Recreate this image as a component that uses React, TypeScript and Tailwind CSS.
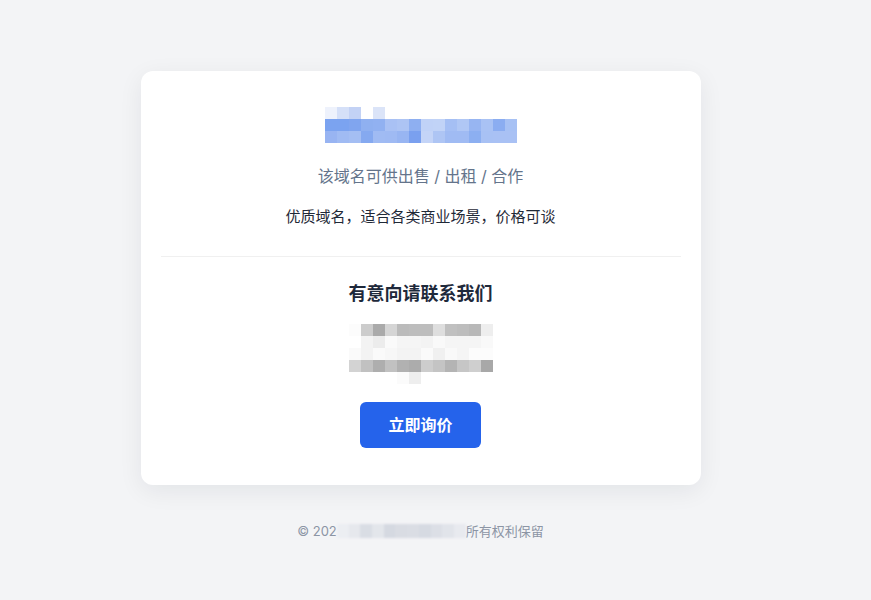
import React from "react";

const titleRows: string[][] = [
  ["bg-[#eef2fc]", "bg-[#d5e0f8]", "bg-[#c3d2f5]", "bg-transparent", "bg-[#dbe4f8]", "bg-transparent", "bg-transparent", "bg-transparent", "bg-transparent", "bg-transparent", "bg-transparent", "bg-transparent", "bg-transparent", "bg-transparent", "bg-transparent", "bg-transparent"],
  ["bg-[#7ba3f0]", "bg-[#7ba3f0]", "bg-[#80a5ef]", "bg-[#8fb0f0]", "bg-[#91b1f1]", "bg-[#a9c1f4]", "bg-[#adc4f4]", "bg-[#8eaff1]", "bg-[#c0d2f7]", "bg-[#c1d3f7]", "bg-[#a5bff4]", "bg-[#b0c7f5]", "bg-[#97b5f2]", "bg-[#a9c2f4]", "bg-[#8badf1]", "bg-[#a7c1f4]"],
  ["bg-[#98b4f2]", "bg-[#a0bbf3]", "bg-[#a4bef3]", "bg-[#85a9f0]", "bg-[#a0bbf3]", "bg-[#9fbaf3]", "bg-[#98b5f2]", "bg-[#7aa0ef]", "bg-[#c4d4f7]", "bg-[#aec5f4]", "bg-[#a0bbf3]", "bg-[#a0bbf3]", "bg-[#8caff1]", "bg-[#a8c1f4]", "bg-[#a9c1f4]", "bg-[#a9c1f4]"],
];

const contactRows: string[][] = [
  ["bg-[#fcfcfc]", "bg-[#cccccc]", "bg-[#aaaaaa]", "bg-[#d5d5d5]", "bg-[#bbbbbb]", "bg-[#bdbdbd]", "bg-[#bdbdbd]", "bg-[#dedede]", "bg-[#c0c0c0]", "bg-[#bdbdbd]", "bg-[#b8b8b8]", "bg-[#eeeeee]"],
  ["bg-transparent", "bg-[#f3f3f3]", "bg-[#ececec]", "bg-[#fafafa]", "bg-[#f5f5f5]", "bg-[#f5f5f5]", "bg-[#f3f3f3]", "bg-[#f9f9f9]", "bg-[#f5f5f5]", "bg-[#f5f5f5]", "bg-[#f5f5f5]", "bg-[#f9f9f9]"],
  ["bg-[#fafafa]", "bg-[#f3f3f3]", "bg-[#fafafa]", "bg-[#f7f7f7]", "bg-[#f3f3f3]", "bg-[#f3f3f3]", "bg-[#fafafa]", "bg-[#f0f0f0]", "bg-[#f9f9f9]", "bg-[#f5f5f5]", "bg-[#fcfcfc]", "bg-[#fcfcfc]"],
  ["bg-[#d3d3d3]", "bg-[#c1c1c1]", "bg-[#aeaeae]", "bg-[#c1c1c1]", "bg-[#b1b1b1]", "bg-[#acacac]", "bg-[#cdcdcd]", "bg-[#c4c4c4]", "bg-[#b4b4b4]", "bg-[#c6c6c6]", "bg-[#cfcfcf]", "bg-[#a8a8a8]"],
  ["bg-transparent", "bg-transparent", "bg-transparent", "bg-transparent", "bg-[#fbfbfb]", "bg-[#eeeeee]", "bg-transparent", "bg-transparent", "bg-transparent", "bg-transparent", "bg-transparent", "bg-transparent"],
];

const footerCells: string[] = [
  "bg-[#eceef2]", "bg-[#e6e8ed]", "bg-[#d9dde4]", "bg-[#e3e6eb]", "bg-[#d5d9e1]", "bg-[#d9dce3]", "bg-[#dadde4]", "bg-[#d6dae2]", "bg-[#dcdfe6]", "bg-[#e1e4ea]", "bg-[#e8eaef]",
];

function Mosaic({ rows }: { rows: string[][] }) {
  return (
    <div className="flex flex-col">
      {rows.map((row, i) => (
        <div key={i} className="flex">
          {row.map((c, j) => (
            <div key={j} className={`w-[12px] h-[12px] ${c}`} />
          ))}
        </div>
      ))}
    </div>
  );
}

export default function App() {
  return (
    <div
      className="min-h-screen w-full bg-[#f3f4f6] pr-[30px] pt-[71px] flex flex-col items-center"
      style={{ fontFamily: 'Inter, "Noto Sans CJK SC", sans-serif' }}
    >
      <div className="w-[560px] bg-white rounded-[12px] shadow-[0_6px_24px_rgba(15,23,42,0.07)] px-[20px] pt-[36px] pb-[37px] flex flex-col items-center">
        <Mosaic rows={titleRows} />
        <p className="mt-[21px] text-[16px] leading-[24px] text-[#64748b]">
          该域名可供出售 / 出租 / 合作
        </p>
        <p className="mt-[18px] text-[15px] leading-[22px] text-[#1f2937]">
          优质域名，适合各类商业场景，价格可谈
        </p>
        <div className="w-full h-px bg-[#f0f0f0] mt-[28px]" />
        <h2 className="mt-[23px] text-[18px] leading-[28px] font-bold text-[#1e293b]">
          有意向请联系我们
        </h2>
        <div className="mt-[16px]">
          <Mosaic rows={contactRows} />
        </div>
        <button className="mt-[18px] bg-[#2563eb] text-white font-bold text-[16px] leading-[24px] px-[28px] py-[11px] rounded-[6px] w-[121px]">
          立即询价
        </button>
      </div>
      <div className="mt-[36px] flex items-center text-[13px] leading-[20px] text-[#8c95a5]">
        <span>© 202</span>
        <span className="flex h-[14px] w-[129px] blur-[1px]">
          {footerCells.map((c, i) => (
            <span key={i} className={`flex-1 h-full ${c}`} />
          ))}
        </span>
        <span>所有权利保留</span>
      </div>
    </div>
  );
}
